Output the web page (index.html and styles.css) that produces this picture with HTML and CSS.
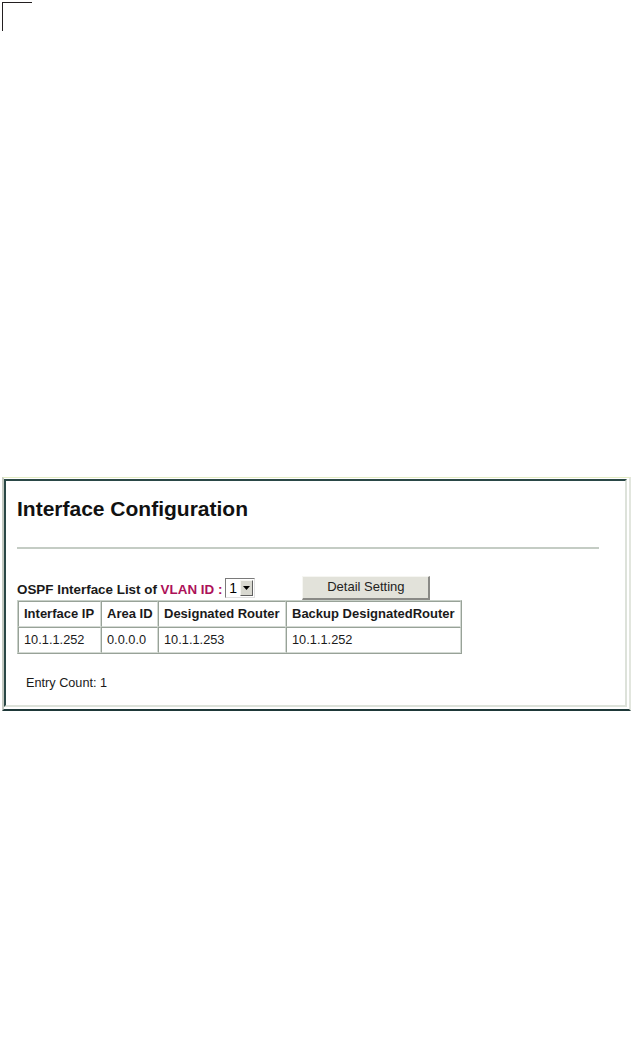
FILE: index.html
```html
<!DOCTYPE html>
<html>
<head>
<meta charset="utf-8">
<link rel="stylesheet" href="styles.css">
</head>
<body>
<div class="cropmark"></div>
<div class="frame">
  <div class="panel">
    <h1 class="title">Interface Configuration</h1>
    <div class="rule"></div>
    <div class="toolbar">
      <span class="label">OSPF Interface List of <span class="accent">VLAN ID :</span></span>
      <span class="select">
        <span class="select-value">1</span>
        <span class="select-btn"><svg width="7" height="4" viewBox="0 0 7 4"><polygon points="0,0 7,0 3.5,4" fill="#000"/></svg></span>
      </span>
      <span class="button">Detail Setting</span>
    </div>
    <table class="grid">
      <colgroup>
        <col class="c1"><col class="c2"><col class="c3"><col class="c4">
      </colgroup>
      <thead>
        <tr class="head-row">
          <th>Interface IP</th>
          <th>Area ID</th>
          <th>Designated Router</th>
          <th>Backup DesignatedRouter</th>
        </tr>
      </thead>
      <tbody>
        <tr class="data-row">
          <td>10.1.1.252</td>
          <td>0.0.0.0</td>
          <td>10.1.1.253</td>
          <td>10.1.1.252</td>
        </tr>
      </tbody>
    </table>
    <div class="count">Entry Count: 1</div>
  </div>
</div>
</body>
</html>
```
FILE: styles.css
```css
html, body {
  margin: 0;
  padding: 0;
  background: #ffffff;
}
body {
  font-family: "Liberation Sans", Arial, sans-serif;
  color: #111;
  width: 631px;
}
.cropmark {
  margin: 2px 0 0 2px;
  width: 29px;
  height: 28px;
  border-top: 1px solid #231f20;
  border-left: 1px solid #231f20;
}
.frame {
  margin: 446px 0 0 2px;
  width: 625px;
  border-top: 1px solid #e4ecc4;
  border-left: 2px solid #c4cac2;
  border-right: 2px solid #e2e6de;
  border-bottom: 2px solid #1e3838;
  padding-bottom: 2px;
  background: #fff;
}
.panel {
  margin: 1px 2px 0 0;
  height: 208px;
  border-top: 2px solid #2a4846;
  border-left: 2px solid #2a4846;
  border-right: 2px solid #dde2da;
  border-bottom: 2px solid #dde2da;
  padding: 16px 0 0 11px;
  box-sizing: content-box;
}
.title {
  margin: 0;
  font-size: 21px;
  line-height: 24px;
  font-weight: bold;
  color: #111;
}
.rule {
  margin-top: 26px;
  width: 582px;
  height: 2px;
  background: #c4ccc4;
}
.toolbar {
  margin-top: 27px;
  height: 24px;
  display: flex;
  align-items: flex-end;
}
.label {
  font-size: 13.4px;
  font-weight: bold;
  line-height: 16px;
  margin-bottom: 2px;
  color: #1a1a1a;
}
.accent {
  color: #ad1159;
}
.select {
  margin: 0 0 2px 3px;
  width: 30px;
  height: 20px;
  box-sizing: border-box;
  display: flex;
  border-top: 1px solid #7a7a7a;
  border-left: 1px solid #7a7a7a;
  border-bottom: 1px solid #e0e0e0;
  border-right: 1px solid #e0e0e0;
  background: #fff;
}
.select-value {
  flex: 1;
  font-size: 14px;
  line-height: 18px;
  padding-left: 3px;
  color: #000;
}
.select-btn {
  width: 13px;
  margin: 1px 1px 1px 0;
  box-sizing: border-box;
  background: #d8d8d0;
  border-top: 1px solid #f4f4f0;
  border-left: 1px solid #f4f4f0;
  border-right: 1px solid #606060;
  border-bottom: 1px solid #606060;
  display: flex;
  align-items: center;
  justify-content: center;
}
.button {
  margin-left: 47px;
  width: 128px;
  height: 24px;
  box-sizing: border-box;
  background: #e2e2da;
  border-top: 1px solid #f6f6f2;
  border-left: 1px solid #f6f6f2;
  border-right: 2px solid #8a8a86;
  border-bottom: 2px solid #8a8a86;
  font-size: 13px;
  line-height: 20px;
  text-align: center;
  color: #222;
}
.grid {
  width: 445px;
  table-layout: fixed;
  border-collapse: separate;
  border-spacing: 0;
  border-top: 1px solid #c8d0c8;
  border-left: 1px solid #c8d0c8;
  border-right: 1px solid #98a298;
  border-bottom: 1px solid #98a298;
}
.c1 { width: 83px; }
.c2 { width: 57px; }
.c3 { width: 128px; }
.c4 { width: 175px; }
.grid th, .grid td {
  box-sizing: border-box;
  text-align: left;
  padding: 0 0 0 5px;
  white-space: nowrap;
  overflow: hidden;
  border-top: 1px solid #98a298;
  border-left: 1px solid #98a298;
  border-right: 1px solid #d4dad4;
  border-bottom: 1px solid #d4dad4;
  vertical-align: middle;
}
.grid th {
  font-size: 13px;
  font-weight: bold;
  line-height: 16px;
  color: #1a1a1a;
}
.grid td {
  font-size: 12.8px;
  font-weight: normal;
  line-height: 16px;
  color: #1a1a1a;
}
.head-row { height: 26px; }
.data-row { height: 26px; }
.count {
  margin: 21px 0 0 9px;
  font-size: 12.7px;
  line-height: 16px;
  color: #1a1a1a;
}
```
